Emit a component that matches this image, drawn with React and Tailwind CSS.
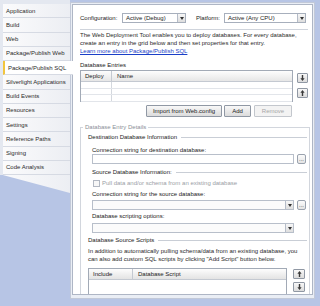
import React from "react";

const tabs = [
  "Application",
  "Build",
  "Web",
  "Package/Publish Web",
  "Package/Publish SQL",
  "Silverlight Applications",
  "Build Events",
  "Resources",
  "Settings",
  "Reference Paths",
  "Signing",
  "Code Analysis",
];

const ArrowIcon = ({ up }) => (
  <svg width="5" height="6" viewBox="0 0 5 6" className={up ? "rotate-180" : ""}>
    <path d="M1.8 0h1.4v3.2H4.6L2.5 6 0.4 3.2h1.4z" fill="#3a3a3a" />
  </svg>
);

const DropArrow = () => (
  <div className="flex h-full w-[8px] items-center justify-center border-l border-[#b5bcc8] bg-gradient-to-b from-[#f7f7f7] to-[#dedede]">
    <svg width="4" height="3" viewBox="0 0 4 3">
      <path d="M0 0h4L2 3z" fill="#333" />
    </svg>
  </div>
);

const Select = ({ value, className }) => (
  <div className={`flex h-[10px] items-stretch border border-[#a7afbc] bg-white ${className}`}>
    <span className="flex-1 pl-[3px] leading-[8px] text-[#222]">{value}</span>
    <DropArrow />
  </div>
);

const SmallButton = ({ children, className = "" }) => (
  <div
    className={`flex items-center justify-center rounded-[1px] border border-[#9098a4] bg-gradient-to-b from-[#f8f8f8] to-[#dcdcdc] ${className}`}
  >
    {children}
  </div>
);

const Ellipsis = () => (
  <div className="ml-[3px] flex h-[10px] w-[9px] items-end justify-center rounded-[2px] border border-[#9aa2ae] bg-gradient-to-b from-[#fbfbfb] to-[#e4e4e4] text-[6px] leading-[7px] text-[#333]">
    ...
  </div>
);

const SectionHeading = ({ text, className = "" }) => (
  <div className={`flex items-center pr-[2px] ${className}`}>
    <span className="leading-[8px] text-[#1a1a1a]">{text}</span>
    <div className="ml-[4px] flex-1 border-t border-[#c9ced6]" />
  </div>
);

export default function App() {
  return (
    <div className="flex h-[306px] w-[320px] overflow-hidden bg-[#b7c5e5] font-['Liberation_Sans',Arial,sans-serif] text-[6px] text-[#222]">
      {/* tab strip */}
      <div className="relative z-10 w-[70px] shrink-0">
        <div className="bg-[#e4e8f0] pl-[3px] pt-[4px]">
          {tabs.map((t) => {
            const active = t === "Package/Publish SQL";
            return (
              <div
                key={t}
                className={`flex h-[14.25px] items-center border-b border-[#d6dae3] pl-[3px] leading-[8px] text-[#2b2b2b] ${
                  active
                    ? "-mr-[3px] border-l-2 border-l-[#f2c53d] bg-white pl-[1px]"
                    : "bg-gradient-to-r from-[#fbfbfc] to-[#eceef3]"
                }`}
              >
                {t}
              </div>
            );
          })}
        </div>
        <div className="h-[18px] bg-gradient-to-r from-[#fbfbfc] to-[#eceef3] [clip-path:polygon(4%_0,100%_0,100%_100%)]" />
      </div>

      {/* main panel */}
      <div className="mt-[2px] flex h-[297px] w-[245px] shrink-0 flex-col border border-[#c2c9d8] bg-[#eaeef5] px-[1px] pb-[3px] pt-[1px]">
        <div className="flex-1 overflow-hidden border border-[#aeb6c5] bg-white pl-[7px]">
          <div className="mt-[8px] flex items-center">
            <span className="w-[42px] leading-[8px]">Configuration:</span>
            <Select value="Active (Debug)" className="w-[64px]" />
            <span className="ml-[10px] w-[28px] leading-[8px]">Platform:</span>
            <Select value="Active (Any CPU)" className="w-[82px]" />
          </div>
          <div className="mr-[4px] mt-[6px] border-t border-[#cfd4dc]" />
          <p className="mt-[1px] leading-[8px] text-[#2a2a2a]">
            The Web Deployment Tool enables you to deploy databases. For every database,
            <br />
            create an entry in the grid below and then set properties for that entry.
            <br />
            <span className="text-[#1a3fc7] underline">Learn more about Package/Publish SQL</span>
          </p>
          <div className="mt-[6px] leading-[8px]">Database Entries</div>

          <div className="mt-[1px] flex">
            <div className="h-[32px] w-[213px] border border-[#a2aab6]">
              <div className="flex h-[11px] border-b border-[#c4c9d1] bg-gradient-to-b from-[#fdfdfd] to-[#e6e6e6]">
                <div className="w-[31px] border-r border-[#c4c9d1] pl-[4px] leading-[10px]">Deploy</div>
                <div className="pl-[5px] leading-[10px]">Name</div>
              </div>
              {[0, 1, 2].map((r) => (
                <div key={r} className="flex h-[6.5px] border-b border-[#e2e5ea]">
                  <div className="w-[31px] border-r border-[#d4d8de]" />
                </div>
              ))}
            </div>
            <div className="ml-[4px] flex w-[11px] flex-col">
              <SmallButton className="mt-[3px] h-[10px]">
                <ArrowIcon />
              </SmallButton>
              <SmallButton className="mt-[5px] h-[10px]">
                <ArrowIcon up />
              </SmallButton>
            </div>
          </div>

          <div className="mt-[3px] flex pl-[66px]">
            <SmallButton className="h-[12px] w-[76px] leading-[10px]">Import from Web.config</SmallButton>
            <SmallButton className="ml-[2px] h-[12px] w-[27px] leading-[10px]">Add</SmallButton>
            <div className="ml-[3px] flex h-[12px] w-[38px] items-center justify-center rounded-[1px] border border-[#c3c7cd] bg-[#f3f3f3] text-[#a6a6a6]">
              Remove
            </div>
          </div>

          <fieldset className="mt-[6px] h-[200px] w-[230px] border border-[#d2d6dd]">
            <legend className="ml-[2px] px-[2px] leading-[8px] text-[#8a8f98]">Database Entry Details</legend>
            <div className="pl-[7px]">
              <SectionHeading text="Destination Database Information" className="mt-[2px]" />
              <div className="pl-[4px]">
                <div className="mt-[5px] leading-[8px]">Connection string for destination database:</div>
                <div className="flex">
                  <div className="h-[10px] w-[202px] border border-[#b8bfca] bg-white" />
                  <Ellipsis />
                </div>
                <SectionHeading text="Source Database Information:" className="mt-[4px]" />
                <div className="mt-[3px] flex items-center">
                  <div className="ml-[1px] h-[7px] w-[7px] border border-[#b2b8c2] bg-[#f7f7f7]" />
                  <span className="ml-[2px] leading-[8px] text-[#9a9ea5]">
                    Pull data and/or schema from an existing database
                  </span>
                </div>
                <div className="mt-[3px] leading-[8px]">Connection string for the source database:</div>
                <div className="mt-[2px] flex">
                  <div className="flex h-[10px] w-[202px] justify-end border border-[#b8bfca] bg-[#fbfbfb]">
                    <DropArrow />
                  </div>
                  <Ellipsis />
                </div>
                <div className="mt-[2px] leading-[8px]">Database scripting options:</div>
                <div className="mt-[3px] flex h-[10px] w-[202px] justify-end border border-[#b8bfca] bg-[#fbfbfb]">
                  <DropArrow />
                </div>
              </div>
              <SectionHeading text="Database Source Scripts" className="mt-[3px]" />
              <p className="mt-[3px] leading-[8px] text-[#2a2a2a]">
                In addition to automatically pulling schema/data from an existing database, you
                <br />
                can also add custom SQL scripts by clicking "Add Script" button below.
              </p>
              <div className="mt-[5px] flex">
                <div className="h-[40px] w-[199px] border border-[#a2aab6]">
                  <div className="flex h-[11px] border-b border-[#c4c9d1] bg-gradient-to-b from-[#fdfdfd] to-[#e3e3e3]">
                    <div className="w-[44px] border-r border-[#c4c9d1] pl-[4px] leading-[10px]">Include</div>
                    <div className="pl-[5px] leading-[10px]">Database Script</div>
                  </div>
                </div>
                <div className="ml-[6px] flex w-[12px] flex-col">
                  <SmallButton className="mt-[1px] h-[10px]">
                    <ArrowIcon up />
                  </SmallButton>
                  <SmallButton className="mt-[3px] h-[10px]">
                    <ArrowIcon />
                  </SmallButton>
                </div>
              </div>
            </div>
          </fieldset>
        </div>
      </div>
    </div>
  );
}
